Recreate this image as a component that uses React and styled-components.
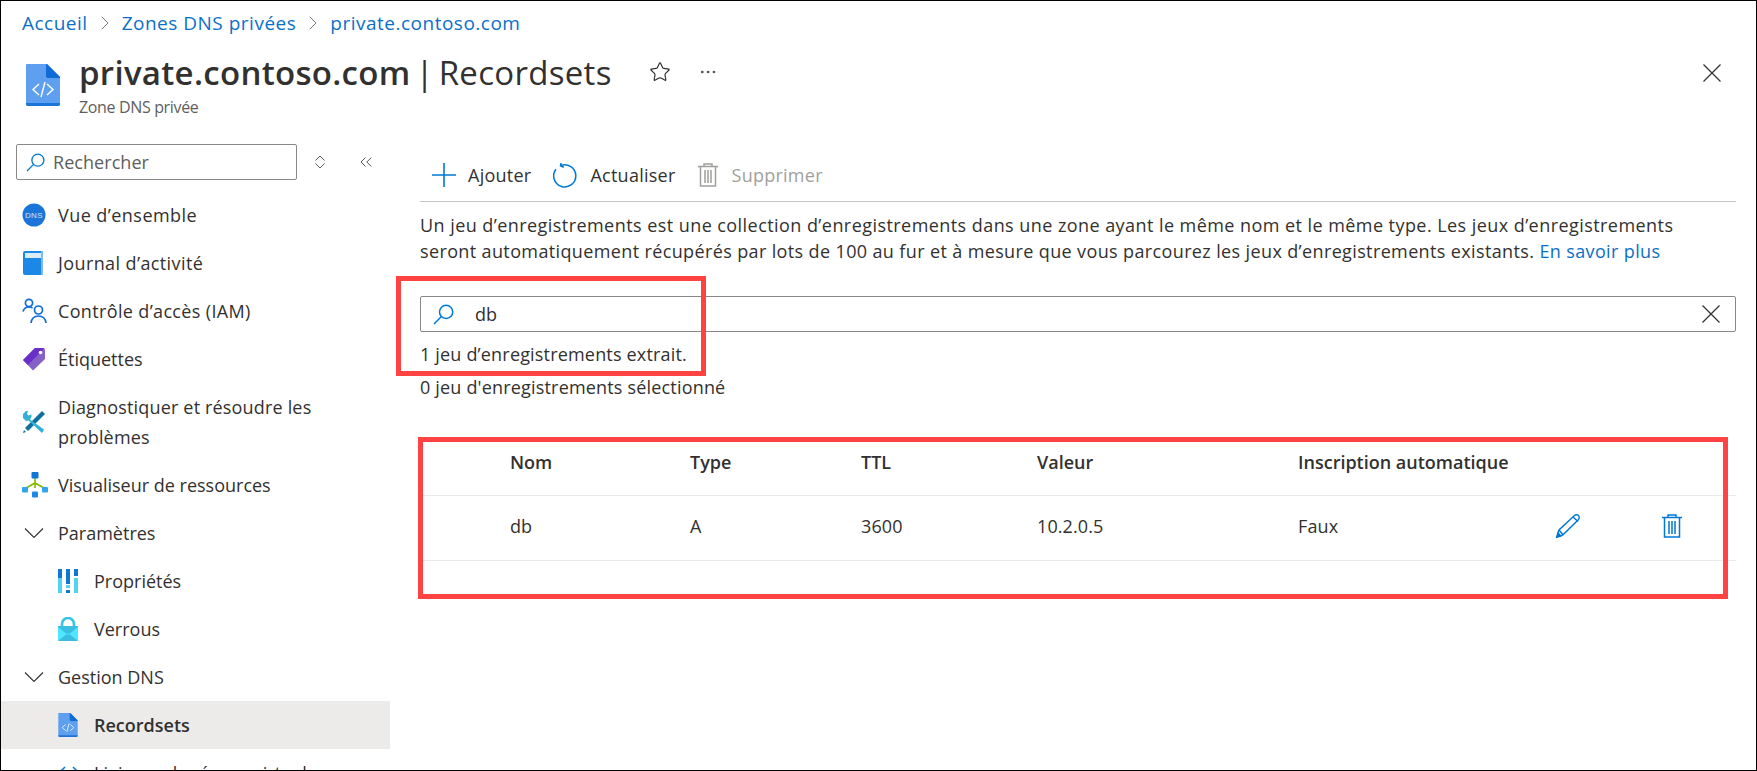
import React from 'react';
import styled, { createGlobalStyle } from 'styled-components';
import { Star, MoreHorizontal, ChevronRight, ChevronsLeft } from 'lucide-react';

const GlobalStyle = createGlobalStyle`
    html, body { margin: 0; padding: 0; background: #fff; }
    body {
        font-family: "Open Sans", "Noto Sans", sans-serif;
        font-size: 18px;
        color: #323130;
    }
    * { box-sizing: border-box; }
`;

const Page = styled.div`
    position: relative;
    width: 1757px;
    height: 771px;
    border: 1px solid #000;
    overflow: hidden;
    background: #fff;
`;

const Breadcrumb = styled.nav`
    height: 45px;
    padding: 0 0 2px 21px;
    display: flex;
    align-items: center;
    font-size: 19px;
    letter-spacing: 0.5px;
`;

const Crumb = styled.span`
    color: #0b6fc9;
`;

const Sep = styled.span`
    display: flex;
    width: 34px;
    justify-content: center;
    color: #7a7a7a;
`;

const Header = styled.header`
    height: 82px;
    display: flex;
    padding: 0 35px 0 25px;
`;

const HeaderLogo = styled.span`
    padding-top: 18px;
`;

const TitleBlock = styled.div`
    margin-left: 19px;
    padding-top: 3px;
`;

const TitleLine = styled.div`
    display: flex;
    align-items: center;
    height: 46px;
`;

const Title = styled.h1`
    margin: 0;
    font-size: 33px;
    font-weight: 400;
    letter-spacing: 0.3px;
    word-spacing: -4px;
    color: #323130;
    b { font-weight: 600; }
`;

const Subtitle = styled.div`
    font-size: 16px;
    letter-spacing: -0.35px;
    color: #605e5c;
    margin-top: 1px;
`;

const HeaderAction = styled.span`
    display: flex;
    margin-left: ${(p) => p.$gap}px;
    color: #323130;
`;

const CloseBtn = styled.span`
    display: flex;
    margin: 18px 0 0 auto;
    height: 18px;
`;

const Body = styled.div`
    display: flex;
    height: 642px;
`;

const Sidebar = styled.aside`
    width: 389px;
    flex: none;
    padding-top: 16px;
`;

const SideTools = styled.div`
    display: flex;
    align-items: center;
    padding-left: 15px;
    margin-bottom: 11px;
`;

const SideSearch = styled.div`
    width: 281px;
    height: 36px;
    border: 1px solid #8a8886;
    border-radius: 2px;
    display: flex;
    align-items: center;
    padding-left: 9px;
    gap: 8px;
    color: #605e5c;
    letter-spacing: 0.05px;
`;

const SortIcon = styled.span`
    display: flex;
    margin-left: 17px;
`;

const CollapseIcon = styled.span`
    display: flex;
    margin-left: 30px;
    color: #323130;
`;

const NavItem = styled.div`
    display: flex;
    align-items: center;
    min-height: ${(p) => (p.$tall ? '78px' : '48px')};
    padding-left: ${(p) => (p.$sub ? '57px' : '21px')};
    line-height: 30px;
    letter-spacing: ${(p) => p.$ls || 0}px;
    font-weight: ${(p) => (p.$active ? 600 : 400)};
    background: ${(p) => (p.$active ? '#edebe9' : 'transparent')};
`;

const NavIcon = styled.span`
    display: flex;
    width: 36px;
    flex: none;
    align-items: center;
`;

const Main = styled.main`
    width: 1316px;
    margin-left: 30px;
`;

const Toolbar = styled.div`
    height: 74px;
    padding: 20px 0 0 12px;
    border-bottom: 1px solid #c8c6c4;
    display: flex;
    align-items: center;
    letter-spacing: 0.25px;
`;

const ToolBtn = styled.span`
    display: flex;
    align-items: center;
    gap: ${(p) => (p.$disabled ? 14 : 12)}px;
    margin-right: 22px;
    color: ${(p) => (p.$disabled ? '#a19f9d' : '#323130')};
`;

const Intro = styled.p`
    margin: 10px 0 0;
    line-height: 26px;
    letter-spacing: 0.44px;
    white-space: nowrap;
    a { color: #0b6fc9; text-decoration: none; }
`;

const IntroTail = styled.span`
    letter-spacing: 0.37px;
`;

const FilterBox = styled.div`
    margin-top: 32px;
    height: 36px;
    border: 1px solid #8a8886;
    border-radius: 2px;
    display: flex;
    align-items: center;
    padding: 0 15px 0 12px;
`;

const FilterValue = styled.span`
    margin-left: 21px;
    flex: 1;
`;

const FilterClear = styled.span`
    display: flex;
`;

const Note = styled.div`
    line-height: 26px;
    margin-top: ${(p) => p.$top}px;
    letter-spacing: 0.18px;
`;

const Table = styled.div`
    margin-top: 31px;
`;

const Row = styled.div`
    display: grid;
    grid-template-columns: 90px 180px 171px 176px 261px 250px 114px 1fr;
    align-items: center;
    height: 65px;
    padding-bottom: ${(p) => (p.$head ? 2 : 4)}px;
    border-bottom: 1px solid #edebe9;
    letter-spacing: ${(p) => (p.$head ? 0 : 0.1)}px;
    font-weight: ${(p) => (p.$head ? 600 : 400)};
`;

const RowIcon = styled.span`
    display: flex;
    padding-left: ${(p) => p.$inset || 0}px;
`;

const RedBox = styled.div`
    position: absolute;
    left: ${(p) => p.$x}px;
    top: ${(p) => p.$y}px;
    width: ${(p) => p.$w}px;
    height: ${(p) => p.$h}px;
    border: 5px solid #ff4343;
    pointer-events: none;
`;

const BLUE = '#0078d4';

const SearchGlyph = ({ size = 19 }) => (
    <svg width={size} height={size} viewBox="0 0 20 20" fill="none" stroke={BLUE} strokeWidth="1.4">
        <circle cx="12.5" cy="7.5" r="6.3" />
        <path d="M8 12 1 19" />
    </svg>
);

const CrossGlyph = () => (
    <svg width="18" height="18" viewBox="0 0 18 18" fill="none" stroke="#323130" strokeWidth="1.2">
        <path d="M.5.5l17 17M17.500.5l-17 17" />
    </svg>
);

const FileCode = ({ w = 34, h = 42 }) => (
    <svg width={w} height={h} viewBox="0 0 34 42">
        <path d="M1 0h20l13 13v27a2 2 0 0 1-2 2H2a2 2 0 0 1-2-2V1a1 1 0 0 1 1-1z" fill="#5ea0ef" />
        <path d="M0 39h34v1a2 2 0 0 1-2 2H2a2 2 0 0 1-2-2z" fill="#1b74d8" />
        <path d="M20 0h1l13 13v1H22a2 2 0 0 1-2-2z" fill="#0f6cd4" />
        <path d="M13 20l-6 5.500 6 5.500M21 20l6 5.500-6 5.500M19 18l-4 15" fill="none" stroke="#fff" strokeWidth="1.4" />
    </svg>
);

const DnsIcon = () => (
    <svg width="24" height="24" viewBox="0 0 24 24">
        <circle cx="12" cy="12" r="11.5" fill="#1b74d8" />
        <text x="12" y="15" textAnchor="middle" fontSize="8" fill="#cfe4fb" fontFamily="Liberation Sans, sans-serif">DNS</text>
    </svg>
);

const BookIcon = () => (
    <svg width="22" height="24" viewBox="0 0 22 24">
        <rect x="1" y="0" width="20" height="24" rx="2" fill="#1b87e6" />
        <rect x="3" y="2" width="16" height="5" fill="#d8ecfb" />
        <path d="M19 0h2v24h-2z" fill="#7bb9ee" />
    </svg>
);

const UsersIcon = () => (
    <svg width="26" height="26" viewBox="0 0 26 26" fill="none" stroke="#0f6cdc" strokeWidth="1.7">
        <circle cx="7" cy="5" r="3.6" />
        <path d="M1 13.500c.8-3 3-4.500 6-4.500 1.500 0 2.600.4 3.600 1.100" />
        <circle cx="16.500" cy="12" r="4" />
        <path d="M9 25c.6-4.500 3.400-7 7.500-7s6.900 2.500 7.500 7" />
    </svg>
);

const TagIcon = () => (
    <svg width="24" height="24" viewBox="0 0 24 24">
        <path d="M13 1h8a2 2 0 0 1 2 2v9L11 23.500 1 13z" fill="#8661c5" />
        <path d="M13 1h8a1 1 0 0 1 1 .5L6 18 1 13z" fill="#6b2fc9" />
        <circle cx="18.500" cy="5.500" r="1.800" fill="#fff" />
    </svg>
);

const ToolsIcon = () => (
    <svg width="24" height="24" viewBox="0 0 24 24">
        <path d="M20 1l3 3L6 21l-3-3z" fill="#0f6f9e" />
        <path d="M1 4l3-3 2 0-1 3 1.500 1.500 3-1 0 2.500-1.500 2.500L22 19.500l-2 3.500L6.500 10.500 4 11 1 8z" fill="#32b0d8" />
        <path d="M1 23l3-1-2-2z" fill="#0f6f9e" />
    </svg>
);

const TreeIcon = () => (
    <svg width="26" height="26" viewBox="0 0 26 26">
        <path d="M13 6v10M13 11l-9 5M13 11l9 5" stroke="#7fba00" strokeWidth="1.600" fill="none" />
        <rect x="9.500" y="0" width="7" height="6.500" rx="1" fill="#0f78d4" />
        <rect x="0" y="15" width="6" height="5.500" rx="1" fill="#32a6e8" />
        <rect x="20" y="15" width="6" height="5.500" rx="1" fill="#32a6e8" />
        <rect x="10" y="19.500" width="6" height="6" rx="1" fill="#1b87e6" />
    </svg>
);

const PropsIcon = () => (
    <svg width="20" height="24" viewBox="0 0 20 24">
        <rect x="0" y="0" width="4" height="9" fill="#0f78d4" />
        <rect x="0" y="9" width="4" height="15" fill="#50d4f2" />
        <rect x="8" y="0" width="4" height="15" fill="#0f78d4" />
        <rect x="8" y="16" width="4" height="3" fill="#50d4f2" />
        <rect x="8" y="21" width="4" height="3" fill="#0f78d4" />
        <rect x="16" y="0" width="4" height="7" fill="#0f78d4" />
        <rect x="16" y="9" width="4" height="15" fill="#50d4f2" />
    </svg>
);

const LockIcon = () => (
    <svg width="20" height="24" viewBox="0 0 20 24">
        <path d="M4 10V7a6 6 0 0 1 12 0v3" fill="none" stroke="#37c2e8" strokeWidth="2.600" />
        <rect x="0" y="9" width="20" height="15" rx="1" fill="#50e6ff" />
        <path d="M0 10l10 8 10-8v-1H0zM0 24l10-8 10 8z" fill="#32b0d8" opacity=".75" />
    </svg>
);

const ExpandChevron = () => (
    <svg width="22" height="11" viewBox="0 0 22 11" fill="none" stroke="#323130" strokeWidth="1.1">
        <path d="M3 .5l9 9 9-9" />
    </svg>
);

const LinkGlyph = () => (
    <svg width="22" height="24" viewBox="0 0 22 24" fill="none" stroke={BLUE} strokeWidth="1.5">
        <path d="M7 6l-6 6 6 6M15 6l6 6-6 6" />
    </svg>
);

const SortGlyph = () => (
    <svg width="12" height="14" viewBox="0 0 12 14" fill="none" stroke="#605e5c" strokeWidth="1">
        <path d="M1.500 5.500 6 1l4.500 4.500M1.500 8.500 6 13l4.500-4.500" />
    </svg>
);

const PlusGlyph = () => (
    <svg width="24" height="24" viewBox="0 0 24 24" fill="none" stroke={BLUE} strokeWidth="1.6">
        <path d="M0 12h24M12 0v24" />
    </svg>
);

const Refresh = () => (
    <svg width="25" height="26" viewBox="0 0 26 26" fill="none" stroke={BLUE} strokeWidth="1.600">
        <path d="M8 3.200A11.500 11.500 0 1 1 3 7" />
        <path d="M8.500 .5 7.800 3.500l3.500 1.500" />
    </svg>
);

const Trash = ({ color }) => (
    <svg width="20" height="24" viewBox="0 0 20 24" fill="none" stroke={color} strokeWidth="1.500">
        <path d="M0 3.500h20M6 3.500V1h8v2.500M2.500 3.500V23h15V3.500M7 7v13M10 7v13M13 7v13" />
    </svg>
);

const Pencil = () => (
    <svg width="24" height="24" viewBox="0 0 24 24" fill="none" stroke={BLUE} strokeWidth="1.400">
        <path d="M.8 23.200 3 16 18.500 1.500c1.500-1.300 3.500-.8 4.300.5.800 1.300.4 2.700-.5 3.700L7 20.800z" />
        <path d="M3 16l4 4.800M17 3l5 4.500" />
        <path d="M.8 23.200 2 19l2.800 3z" fill={BLUE} />
    </svg>
);

const App = () => {
    return (
        <Page>
            <GlobalStyle />
            <Breadcrumb>
                <Crumb>Accueil</Crumb>
                <Sep><ChevronRight size={24} strokeWidth={1} /></Sep>
                <Crumb>Zones DNS privées</Crumb>
                <Sep><ChevronRight size={24} strokeWidth={1} /></Sep>
                <Crumb>private.contoso.com</Crumb>
            </Breadcrumb>
            <Header>
                <HeaderLogo><FileCode /></HeaderLogo>
                <TitleBlock>
                    <TitleLine>
                        <Title><b>private.contoso.com</b> | Recordsets</Title>
                        <HeaderAction $gap={37}><Star size={22} strokeWidth={1.3} /></HeaderAction>
                        <HeaderAction $gap={27}><MoreHorizontal size={20} strokeWidth={1.2} /></HeaderAction>
                    </TitleLine>
                    <Subtitle>Zone DNS privée</Subtitle>
                </TitleBlock>
                <CloseBtn><CrossGlyph /></CloseBtn>
            </Header>
            <Body>
                <Sidebar>
                    <SideTools>
                        <SideSearch><SearchGlyph />Rechercher</SideSearch>
                        <SortIcon><SortGlyph /></SortIcon>
                        <CollapseIcon><ChevronsLeft size={20} strokeWidth={1} /></CollapseIcon>
                    </SideTools>
                    <NavItem $ls={0.45}><NavIcon><DnsIcon /></NavIcon>Vue d’ensemble</NavItem>
                    <NavItem $ls={0.4}><NavIcon><BookIcon /></NavIcon>Journal d’activité</NavItem>
                    <NavItem $ls={0.35}><NavIcon><UsersIcon /></NavIcon>Contrôle d’accès (IAM)</NavItem>
                    <NavItem><NavIcon><TagIcon /></NavIcon>Étiquettes</NavItem>
                    <NavItem $tall $ls={0.17}><NavIcon><ToolsIcon /></NavIcon><span>Diagnostiquer et résoudre les<br />problèmes</span></NavItem>
                    <NavItem><NavIcon><TreeIcon /></NavIcon>Visualiseur de ressources</NavItem>
                    <NavItem><NavIcon><ExpandChevron /></NavIcon>Paramètres</NavItem>
                    <NavItem $sub><NavIcon><PropsIcon /></NavIcon>Propriétés</NavItem>
                    <NavItem $sub><NavIcon><LockIcon /></NavIcon>Verrous</NavItem>
                    <NavItem><NavIcon><ExpandChevron /></NavIcon>Gestion DNS</NavItem>
                    <NavItem $sub $active><NavIcon><FileCode w={20} h={24} /></NavIcon>Recordsets</NavItem>
                    <NavItem $sub><NavIcon><LinkGlyph /></NavIcon>Liaisons de réseau virtuel</NavItem>
                </Sidebar>
                <Main>
                    <Toolbar>
                        <ToolBtn><PlusGlyph />Ajouter</ToolBtn>
                        <ToolBtn><Refresh />Actualiser</ToolBtn>
                        <ToolBtn $disabled><Trash color="#a19f9d" />Supprimer</ToolBtn>
                    </Toolbar>
                    <Intro>
                        Un jeu d’enregistrements est une collection d’enregistrements dans une zone ayant le même nom et le même type. Les jeux d’enregistrements<br />
                        <IntroTail>seront automatiquement récupérés par lots de 100 au fur et à mesure que vous parcourez les jeux d’enregistrements existants. <a href="#more">En savoir plus</a></IntroTail>
                    </Intro>
                    <FilterBox>
                        <SearchGlyph size={21} />
                        <FilterValue>db</FilterValue>
                        <FilterClear><CrossGlyph /></FilterClear>
                    </FilterBox>
                    <Note $top={9}>1 jeu d’enregistrements extrait.</Note>
                    <Note $top={7}>0 jeu d'enregistrements sélectionné</Note>
                    <Table>
                        <Row $head>
                            <span />
                            <span>Nom</span>
                            <span>Type</span>
                            <span>TTL</span>
                            <span>Valeur</span>
                            <span>Inscription automatique</span>
                        </Row>
                        <Row>
                            <span />
                            <span>db</span>
                            <span>A</span>
                            <span>3600</span>
                            <span>10.2.0.5</span>
                            <span>Faux</span>
                            <RowIcon $inset={8}><Pencil /></RowIcon>
                            <RowIcon><Trash color={BLUE} /></RowIcon>
                        </Row>
                    </Table>
                </Main>
            </Body>
            <RedBox $x={395} $y={275} $w={310} $h={100} />
            <RedBox $x={417} $y={436} $w={1310} $h={162} />
        </Page>
    );
};

export default App;
